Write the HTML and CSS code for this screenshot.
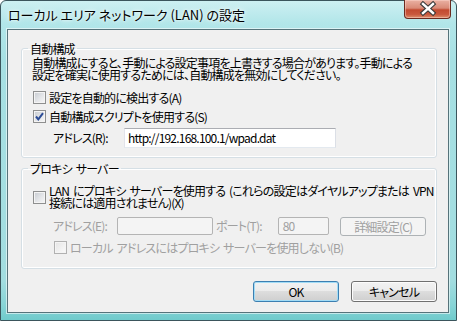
FILE: index.html
```html
<!DOCTYPE html>
<html lang="ja">
<head>
<meta charset="utf-8">
<title>ローカル エリア ネットワーク (LAN) の設定</title>
<link rel="stylesheet" href="styles.css">
</head>
<body>
<div class="window">
  <div class="titlebar">
    <span class="title">ローカル エリア ネットワーク (LAN) の設定</span>
    <div class="close">
      <svg width="47" height="19" viewBox="0 0 47 19">
        <path d="M19 5 L29 14 M29 5 L19 14" stroke="#3a3a3a" stroke-width="4.6" stroke-linecap="square" fill="none"/>
        <path d="M19 5 L29 14 M29 5 L19 14" stroke="#ffffff" stroke-width="2.4" stroke-linecap="square" fill="none"/>
      </svg>
    </div>
  </div>
  <div class="client">
    <fieldset class="group g1">
      <legend>自動構成</legend>
      <p class="desc">自動構成にすると、手動による設定事項を上書きする場合があります。手動による<br>設定を確実に使用するためには、自動構成を無効にしてください。</p>
      <div class="check first"><span class="box"></span><span>設定を自動的に検出する(A)</span></div>
      <div class="check"><span class="box"><svg width="11" height="11" viewBox="0 0 11 11"><path d="M2 5.5 L4.3 8.3 L9 2.2" stroke="#2c4c96" stroke-width="2" fill="none"/></svg></span><span>自動構成スクリプトを使用する(S)</span></div>
      <div class="addr-row"><span class="lbl-r">アドレス(R):</span><div class="input">http://192.168.100.1/wpad.dat</div></div>
    </fieldset>
    <fieldset class="group g2">
      <legend>プロキシ サーバー</legend>
      <div class="check two"><span class="box"></span><span>LAN にプロキシ サーバーを使用する (これらの設定はダイヤルアップまたは VPN<br>接続には適用されません)(X)</span></div>
      <div class="proxy-row disabled">
        <span class="lbl-e">アドレス(E):</span>
        <div class="input dis addr"></div>
        <span class="lbl-t">ポート(T):</span>
        <div class="input dis port">80</div>
        <div class="btn dis adv">詳細設定(C)</div>
      </div>
      <div class="check local disabled"><span class="box"></span><span>ローカル アドレスにはプロキシ サーバーを使用しない(B)</span></div>
    </fieldset>
    <div class="buttons">
      <div class="btn default">OK</div>
      <div class="btn">キャンセル</div>
    </div>
  </div>
</div>
</body>
</html>
```

FILE: styles.css
```css
html, body {
  margin: 0;
  padding: 0;
  background: #ffffff;
}
body {
  font-family: "Noto Sans CJK JP", "Noto Sans", sans-serif;
  font-size: 12px;
  line-height: 12px;
  font-feature-settings: "palt";
  letter-spacing: -0.8px;
  word-spacing: 2px;
  white-space: nowrap;
  color: #000;
}
.window {
  width: 457px;
  height: 321px;
  box-sizing: border-box;
  border: 1px solid #3b555c;
  border-radius: 6px 6px 0 0;
  background: linear-gradient(180deg, #cdf0f2 0px, #b2e6e9 22px, #a6e0e3 60px, #a2dde0 280px, #86d4d6 305px, #6cc9ca 321px);
  display: flex;
  flex-direction: column;
}
.titlebar {
  height: 28px;
  display: flex;
  align-items: flex-start;
  padding-left: 7px;
}
.title {
  margin-top: 6px;
  font-size: 13px;
  line-height: 16px;
  letter-spacing: 0;
  word-spacing: 0;
  color: #000;
  text-shadow: 0 0 6px rgba(255,255,255,0.9), 0 0 3px rgba(255,255,255,0.9);
}
.close {
  margin-left: auto;
  margin-right: 5px;
  margin-top: -1px;
  width: 47px;
  height: 19px;
  box-sizing: border-box;
  border: 1px solid #6b2a20;
  border-top: none;
  border-radius: 0 0 4px 4px;
  background: linear-gradient(180deg, #eab1a3 0%, #d98a77 45%, #c24a30 55%, #c9583d 80%, #dd8f6c 100%);
  box-shadow: inset 0 0 0 1px rgba(255,220,210,0.45);
}
.close svg {
  display: block;
  margin: -1px 0 0 -1px;
}
.client {
  flex: 1;
  margin: 0 7px 7px 6px;
  border: 1px solid #56737a;
  background: #f0f0f0;
  display: flex;
  flex-direction: column;
  box-shadow: 0 0 0 1px rgba(255,255,255,0.55);
}
.group {
  margin: 0 11px 0 13px;
  border: 1px solid #d5dfe5;
  border-radius: 3px;
  box-shadow: inset 0 0 0 1px #ffffff;
  padding: 2px 10px 0 10px;
  min-width: 0;
}
.group legend {
  padding: 0 2px;
  margin-left: -4px;
  line-height: 13px;
}
.g1 {
  margin-top: 12px;
  padding-bottom: 9px;
}
.g2 {
  margin-top: 4px;
  padding-bottom: 11px;
}
.desc {
  margin: 0;
}
.check {
  display: flex;
  align-items: center;
  height: 19px;
  margin-left: 1px;
}
.check.first {
  margin-top: 7px;
}
.box {
  width: 13px;
  height: 13px;
  box-sizing: border-box;
  border: 1px solid #8e8f8f;
  background: linear-gradient(135deg, #c6cad0 0%, #e4e6e9 55%, #f7f7f7 100%);
  box-shadow: inset 0 0 0 1px #f4f4f4;
  margin-right: 3px;
  flex: none;
  display: flex;
  align-items: center;
  justify-content: center;
}
.check.two {
  height: 24px;
  margin-top: 8px;
}
.addr-row {
  display: flex;
  align-items: center;
  margin-top: 2px;
  height: 20px;
}
.lbl-r {
  width: 71px;
  margin-left: 21px;
}
.input {
  box-sizing: border-box;
  height: 20px;
  width: 212px;
  background: #ffffff;
  border: 1px solid;
  border-color: #abadb3 #dbdfe6 #e3e9ef #e2e3ea;
  padding-left: 3px;
  line-height: 18px;
}
.proxy-row {
  display: flex;
  align-items: flex-start;
  margin-top: 8px;
  height: 19px;
}
.disabled {
  color: #a0a0a0;
}
.lbl-e {
  margin-left: 21px;
  width: 64px;
  margin-top: 3px;
}
.lbl-t {
  margin-left: 3px;
  width: 62px;
  margin-top: 3px;
}
.input.dis {
  height: 18px;
  border-color: #b4b4b4;
  border-radius: 2px;
  background: #f4f4f4;
  line-height: 16px;
}
.input.addr {
  width: 97px;
}
.input.port {
  width: 52px;
  padding-left: 4px;
}
.btn {
  box-sizing: border-box;
  width: 86px;
  height: 21px;
  border: 1px solid #707070;
  border-radius: 3px;
  background: linear-gradient(180deg, #f2f2f2 0%, #ebebeb 50%, #dddddd 50%, #cfcfcf 100%);
  box-shadow: inset 0 0 0 1px #fcfcfc;
  display: flex;
  align-items: center;
  justify-content: center;
  line-height: 12px;
}
.btn.dis {
  margin-left: 11px;
  height: 19px;
  border-color: #adb2b5;
  background: #f4f4f4;
  box-shadow: none;
  color: #a0a0a0;
}
.btn.default {
  border-color: #3c7fb1;
  box-shadow: inset 0 0 0 1px #a2dcf6;
}
.check.local {
  margin-top: 2px;
  margin-left: 22px;
}
.disabled .box {
  border-color: #b1b1b1;
  background: linear-gradient(135deg, #e4e4e4 0%, #f2f2f2 60%, #fafafa 100%);
}
.buttons {
  display: flex;
  justify-content: flex-end;
  gap: 12px;
  margin: 12px 11px 0 0;
}
```
